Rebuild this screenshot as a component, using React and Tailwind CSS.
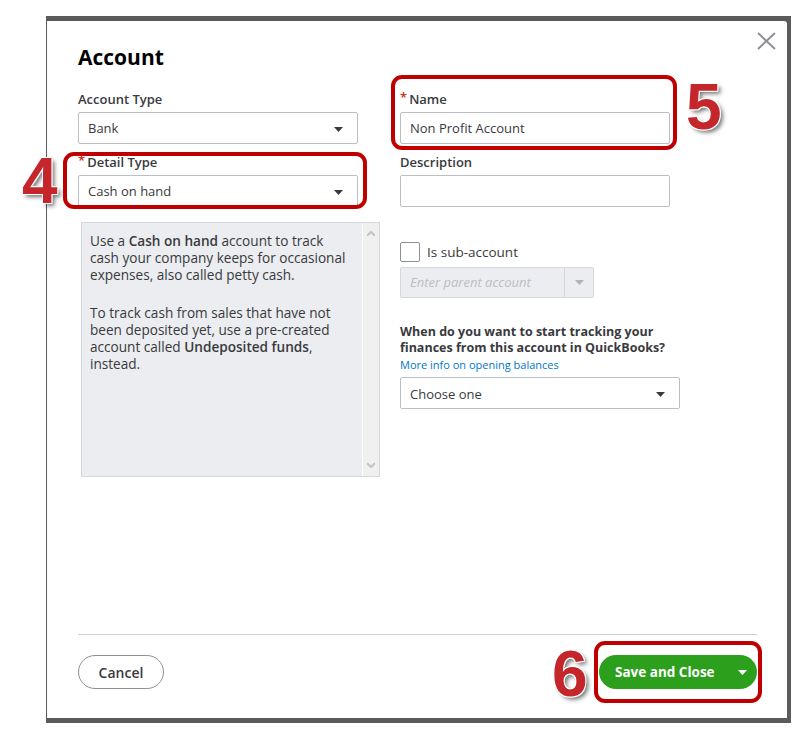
import React from 'react';

const Caret = ({ color = '#393a3d' }) => (
  <svg width="9" height="5" viewBox="0 0 9 5">
    <path d="M0 0h9L4.5 5z" fill={color} />
  </svg>
);

const Label = ({ children, required }) => (
  <div className="h-[18px] leading-[18px] mb-[4px] text-[13px] font-semibold text-[#393a3d] flex items-center">
    {required && <span className="text-[#d52b1e] text-[13px] mr-[2px] -mt-[4px]">*</span>}
    {children}
  </div>
);

const Select = ({ value, width = 'w-[280px]' }) => (
  <div className={`${width} h-[32px] border border-[#babec5] rounded-[2px] bg-white flex items-center justify-between pl-[9px] pr-[14px] pt-[2px] text-[13px] text-[#393a3d]`}>
    <span>{value}</span>
    <Caret />
  </div>
);

const Input = ({ value }) => (
  <div className="w-[270px] h-[32px] border border-[#babec5] rounded-[2px] bg-white flex items-center pl-[9px] pt-[2px] text-[13px] text-[#393a3d]">
    {value}
  </div>
);

const Step = ({ n, pos }) => (
  <div
    className={`absolute ${pos} text-[64px] leading-none font-bold text-[#c4262b] [text-shadow:1px_1px_0_#fff,-1px_-1px_0_#fff,1px_-1px_0_#fff,-1px_1px_0_#fff,3px_3px_4px_rgba(0,0,0,0.55)]`}
    style={{ fontFamily: '"Liberation Sans", Arial, sans-serif' }}
  >
    {n}
  </div>
);

const RedBox = ({ pos }) => (
  <div className={`absolute ${pos} border-[4px] border-[#c00000] rounded-[11px]`} />
);

export default function App() {
  return (
    <div className="relative w-[810px] h-[732px] bg-white overflow-hidden" style={{ fontFamily: '"Open Sans", sans-serif' }}>
      <div className="ml-[46px] pt-[16px]">
        <div className="w-[745px] h-[707px] bg-[#5b5b5b] pl-px pt-[5px] pr-[4px] pb-[5px]">
          <div className="relative h-full bg-white rounded-tr-[3px] flex flex-col">
            <button className="absolute top-[11px] right-[11px]">
              <svg width="19" height="18" viewBox="0 0 19 18">
                <path d="M1 1l17 16M18 1L1 17" stroke="#8d9096" strokeWidth="2" />
              </svg>
            </button>

            <div className="pl-[31px] pt-[22px]">
              <h1 className="text-[21px] leading-[28px] font-bold text-[#000]">Account</h1>

              <div className="mt-[19px] flex gap-[42px]">
                <div className="w-[280px]">
                  <Label>Account Type</Label>
                  <Select value="Bank" />
                  <div className="mt-[9px]">
                    <Label required>Detail Type</Label>
                    <Select value="Cash on hand" />
                  </div>
                  <div className="mt-[15px] ml-[3px] w-[299px] h-[255px] bg-[#ebedf0] border border-[#d4d7dc] flex">
                    <div className="flex-1 pl-[8px] pt-[9px] text-[13.6px] leading-[17px] text-[#393a3d]">
                      <div className="w-[262px]">
                        <p>
                          Use a <b className="font-semibold">Cash on hand</b> account to track cash your company keeps for occasional expenses, also called petty cash.
                        </p>
                        <p className="mt-[21px]">
                          To track cash from sales that have not been deposited yet, use a pre-created account called <b className="font-semibold">Undeposited funds</b>, instead.
                        </p>
                      </div>
                    </div>
                    <div className="w-[17px] bg-[#f0f0f0] border-l border-white flex flex-col items-center justify-between py-[8px]">
                      <svg width="8" height="5" viewBox="0 0 8 5">
                        <path d="M0 5L4 1l4 4" stroke="#c2c2c2" strokeWidth="2" fill="none" />
                      </svg>
                      <svg width="8" height="5" viewBox="0 0 8 5">
                        <path d="M0 0l4 4 4-4" stroke="#c2c2c2" strokeWidth="2" fill="none" />
                      </svg>
                    </div>
                  </div>
                </div>

                <div className="w-[280px]">
                  <Label required>Name</Label>
                  <Input value="Non Profit Account" />
                  <div className="mt-[9px]">
                    <Label>Description</Label>
                    <Input value="" />
                  </div>
                  <label className="mt-[35px] flex items-center gap-[7px] text-[13.5px] text-[#393a3d]">
                    <span className="w-[20px] h-[20px] border border-[#8d9096] rounded-[2px] bg-white" />
                    Is sub-account
                  </label>
                  <div className="mt-[5px] w-[194px] h-[31px] bg-[#ebedf0] border border-[#d4d7dc] rounded-[2px] flex">
                    <div className="flex-1 pl-[9px] flex items-center text-[13px] italic text-[#bbbec3]">Enter parent account</div>
                    <div className="w-[29px] border-l border-[#d4d7dc] flex items-center justify-center">
                      <Caret color="#b0b3b8" />
                    </div>
                  </div>
                  <div className="mt-[26px] text-[12.5px] leading-[16px] font-bold text-[#393a3d]">
                    When do you want to start tracking your<br />finances from this account in QuickBooks?
                  </div>
                  <a className="block mt-[2px] text-[11px] leading-[14px] text-[#0077c5]">More info on opening balances</a>
                  <div className="mt-[5px]">
                    <Select value="Choose one" />
                  </div>
                </div>
              </div>
            </div>

            <div className="mt-auto mr-[30px] ml-[31px] border-t border-[#cfd1d4] pt-[20px] pb-[29px] flex justify-between">
              <button className="w-[86px] h-[34px] rounded-full border border-[#8d9096] text-[14px] font-semibold text-[#393a3d]">
                Cancel
              </button>
              <button className="w-[158px] h-[34px] rounded-full bg-[#2ca01c] text-white text-[13.5px] font-bold flex items-center pl-[16px] pr-[10px] justify-between">
                <span>Save and Close</span>
                <Caret color="#fff" />
              </button>
            </div>
          </div>
        </div>
      </div>

      <RedBox pos="left-[63px] top-[152px] w-[304px] h-[57px]" />
      <RedBox pos="left-[391px] top-[75px] w-[286px] h-[75px]" />
      <RedBox pos="left-[594px] top-[641px] w-[168px] h-[62px]" />
      <Step n="4" pos="left-[22px] top-[149px]" />
      <Step n="5" pos="left-[686px] top-[75px]" />
      <Step n="6" pos="left-[552px] top-[642px]" />
    </div>
  );
}
